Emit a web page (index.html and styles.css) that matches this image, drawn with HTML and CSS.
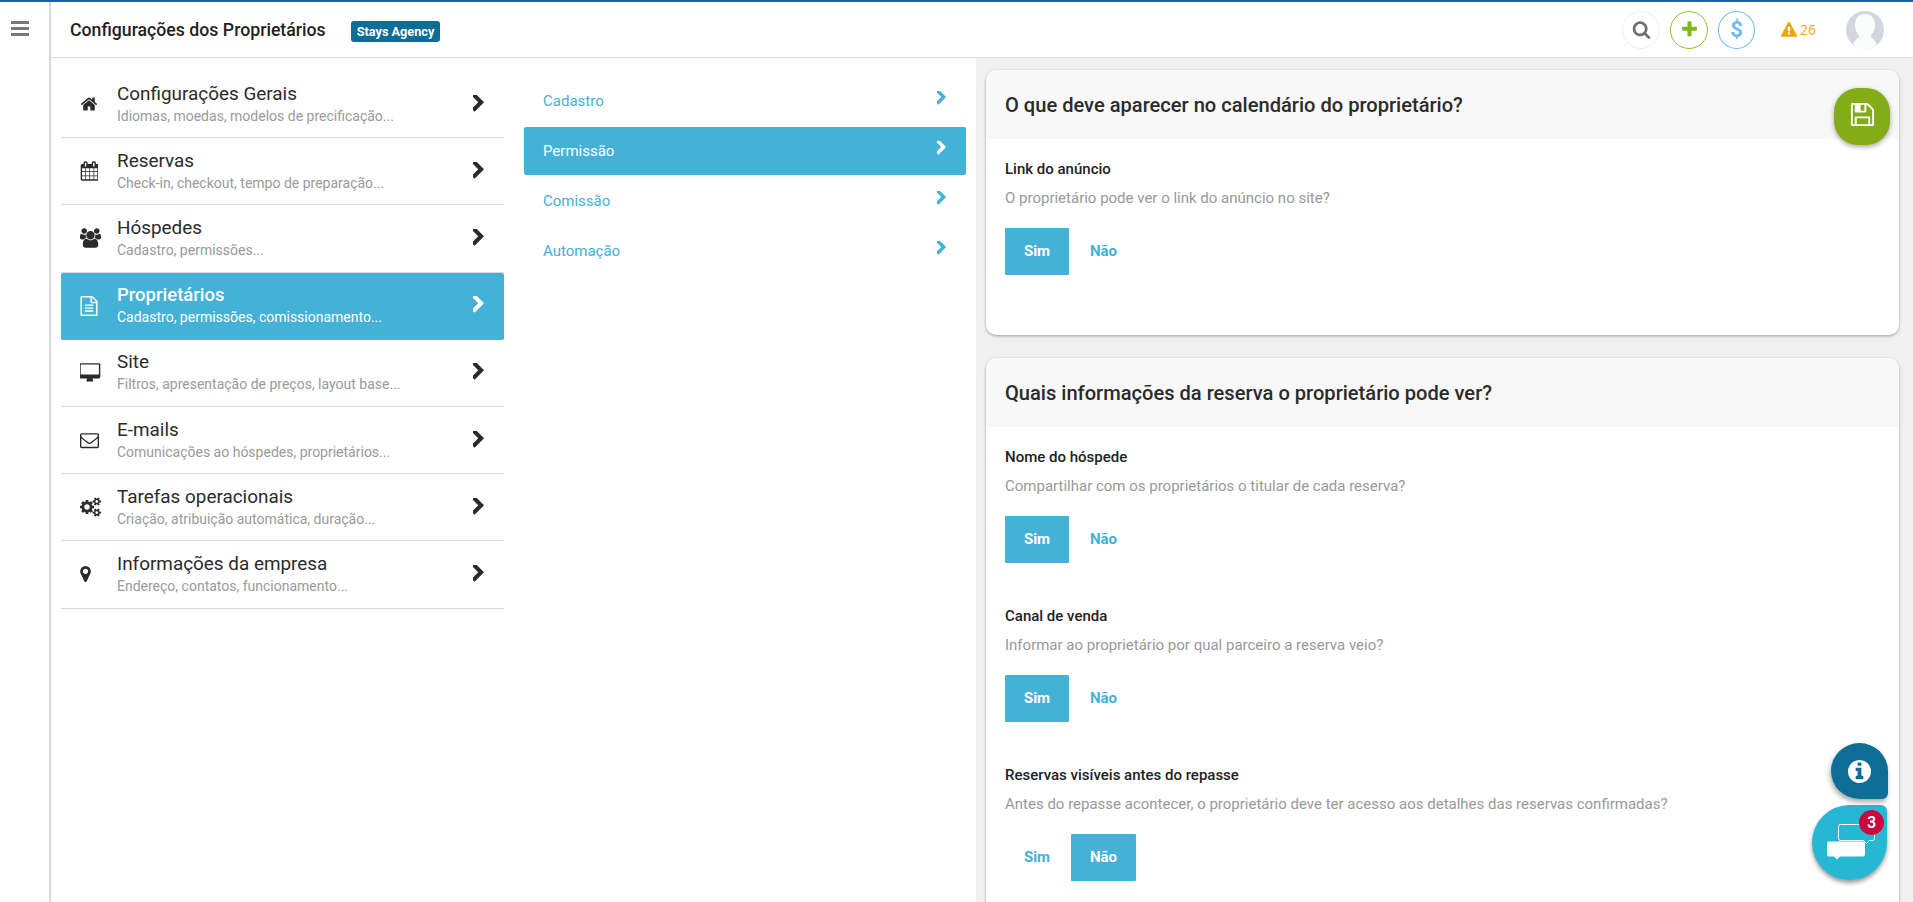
FILE: index.html
```html
<!DOCTYPE html>
<html lang="pt-BR">
<head>
<meta charset="utf-8">
<title>Configurações dos Proprietários</title>
<link rel="stylesheet" href="styles.css">
</head>
<body>
<svg class="defs" aria-hidden="true">
  <symbol id="i-chev" viewBox="440 230 960 1400"><path d="M1363 877l-742 742q-19 19-45 19t-45-19l-166-166q-19-19-19-45t19-45l531-531-531-531q-19-19-19-45t19-45l166-166q19-19 45-19t45 19l742 742q19 19 19 45t-19 45z" transform="translate(0 -6)"/></symbol>
  <symbol id="i-home" viewBox="0 0 1792 1792"><path d="M1472 992v480q0 26-19 45t-45 19h-384v-384h-256v384h-384q-26 0-45-19t-19-45v-480q0-1 .5-3t.5-3l575-474 575 474q1 2 1 6zm223-69l-62 74q-8 9-21 11h-3q-13 0-21-7l-692-577-692 577q-12 8-24 7-13-2-21-11l-62-74q-8-10-7-23.5t11-21.5l719-599q32-26 76-26t76 26l244 204v-195q0-14 9-23t23-9h192q14 0 23 9t9 23v408l219 182q10 8 11 21.5t-7 23.5z"/></symbol>
  <symbol id="i-cal" viewBox="0 0 1664 1792"><path d="M192 1664h288v-288h-288v288zm352 0h320v-288h-320v288zm-352-352h288v-320h-288v320zm352 0h320v-320h-320v320zm-352-384h288v-288h-288v288zm736 736h320v-288h-320v288zm-384-736h320v-288h-320v288zm768 736h288v-288h-288v288zm-384-352h320v-320h-320v320zm-352-864v-288q0-13-9.5-22.5t-22.5-9.5h-64q-13 0-22.5 9.5t-9.5 22.5v288q0 13 9.5 22.5t22.5 9.5h64q13 0 22.5-9.5t9.5-22.5zm736 864h288v-320h-288v320zm-384-384h320v-288h-320v288zm384 0h288v-288h-288v288zm32-480v-288q0-13-9.5-22.5t-22.5-9.5h-64q-13 0-22.5 9.5t-9.5 22.5v288q0 13 9.5 22.5t22.5 9.5h64q13 0 22.5-9.5t9.5-22.5zm384-64v1280q0 52-38 90t-90 38h-1408q-52 0-90-38t-38-90v-1280q0-52 38-90t90-38h128v-96q0-66 47-113t113-47h64q66 0 113 47t47 113v96h384v-96q0-66 47-113t113-47h64q66 0 113 47t47 113v96h128q52 0 90 38t38 90z"/></symbol>
  <symbol id="i-users" viewBox="0 0 1920 1792"><path d="M593 896q-162 5-265 128h-134q-82 0-138-40.5t-56-118.5q0-353 124-353 6 0 43.5 21t97.5 42.5 119 21.5q67 0 133-23-5 37-5 66 0 139 81 256zm1071 637q0 120-73 189.5t-194 69.5h-874q-121 0-194-69.5t-73-189.5q0-53 3.5-103.5t14-109 26.5-108.5 43-97.5 62-81 85.5-53.5 111.5-20q10 0 43 21.5t73 48 107 48 135 21.5 135-21.5 107-48 73-48 43-21.5q61 0 111.5 20t85.5 53.5 62 81 43 97.5 26.5 108.5 14 109 3.5 103.5zm-1024-1277q0 106-75 181t-181 75-181-75-75-181 75-181 181-75 181 75 75 181zm704 384q0 159-112.5 271.5t-271.5 112.5-271.5-112.5-112.5-271.5 112.5-271.5 271.5-112.5 271.5 112.5 112.5 271.5zm576 225q0 78-56 118.5t-138 40.5h-134q-103-123-265-128 81-117 81-256 0-29-5-66 66 23 133 23 59 0 119-21.5t97.5-42.5 43.5-21q124 0 124 353zm-128-609q0 106-75 181t-181 75-181-75-75-181 75-181 181-75 181 75 75 181z"/></symbol>
  <symbol id="i-file" viewBox="0 0 1792 1792"><path d="M1596 380q28 28 48 76t20 88v1152q0 40-28 68t-68 28h-1344q-40 0-68-28t-28-68v-1600q0-40 28-68t68-28h896q40 0 88 20t76 48zm-444-244v376h376q-10-29-22-41l-313-313q-12-12-41-22zm384 1528v-1024h-416q-40 0-68-28t-28-68v-416h-768v1536h1280zm-1024-864q0-14 9-23t23-9h704q14 0 23 9t9 23v64q0 14-9 23t-23 9h-704q-14 0-23-9t-9-23v-64zm736 224q14 0 23 9t9 23v64q0 14-9 23t-23 9h-704q-14 0-23-9t-9-23v-64q0-14 9-23t23-9h704zm0 256q14 0 23 9t9 23v64q0 14-9 23t-23 9h-704q-14 0-23-9t-9-23v-64q0-14 9-23t23-9h704z"/></symbol>
  <symbol id="i-desk" viewBox="0 0 1920 1792"><path d="M1728 992v-832q0-13-9.5-22.5t-22.5-9.5h-1600q-13 0-22.5 9.5t-9.5 22.5v832q0 13 9.5 22.5t22.5 9.5h1600q13 0 22.5-9.5t9.5-22.5zm128-832v1088q0 66-47 113t-113 47h-544q0 37 16 77.5t32 71 16 43.5q0 26-19 45t-45 19h-512q-26 0-45-19t-19-45q0-14 16-44t32-70 16-78h-544q-66 0-113-47t-47-113v-1088q0-66 47-113t113-47h1632q66 0 113 47t47 113z"/></symbol>
  <symbol id="i-env" viewBox="0 0 1792 1792"><path d="M1664 1504v-768q-32 36-69 66-268 206-426 338-51 43-83 67t-86.5 48.5-102.5 24.5h-2q-48 0-102.5-24.5t-86.5-48.5-83-67q-158-132-426-338-37-30-69-66v768q0 13 9.5 22.5t22.5 9.5h1472q13 0 22.5-9.5t9.5-22.5zm0-1051v-24.5l-.5-13-3-12.5-5.5-9-9-7.5-14-2.5h-1472q-13 0-22.5 9.5t-9.5 22.5q0 168 147 284 193 152 401 317 6 5 35 29.5t46 37.5 44.5 31.5 50.5 27.5 43 9h2q20 0 43-9t50.5-27.5 44.5-31.5 46-37.5 35-29.5q208-165 401-317 54-43 100.5-115.5t46.5-131.5zm128-37v1088q0 66-47 113t-113 47h-1472q-66 0-113-47t-47-113v-1088q0-66 47-113t113-47h1472q66 0 113 47t47 113z"/></symbol>
  <symbol id="i-cogs" viewBox="0 0 1920 1792"><path d="M896 896q0-106-75-181t-181-75-181 75-75 181 75 181 181 75 181-75 75-181zm768 512q0-52-38-90t-90-38-90 38-38 90q0 53 37.5 90.5t90.5 37.5 90.5-37.5 37.5-90.5zm0-1024q0-52-38-90t-90-38-90 38-38 90q0 53 37.5 90.5t90.5 37.5 90.5-37.5 37.5-90.5zm-384 421v185q0 10-7 19.5t-16 10.5l-155 24q-11 35-32 76 34 48 90 115 7 11 7 20 0 12-7 19-23 30-82.5 89.5t-78.5 59.5q-11 0-21-7l-115-90q-37 19-77 31-11 108-23 155-7 24-30 24h-186q-11 0-20-7.5t-10-17.5l-23-153q-34-10-75-31l-118 89q-7 7-20 7-11 0-21-8-144-133-144-160 0-9 7-19 10-14 41-53t47-61q-23-44-35-82l-152-24q-10-1-17-9.5t-7-19.5v-185q0-10 7-19.5t16-10.5l155-24q11-35 32-76-34-48-90-115-7-11-7-20 0-12 7-20 22-30 82-89t79-59q11 0 21 7l115 90q34-18 77-32 11-108 23-154 7-24 30-24h186q11 0 20 7.5t10 17.5l23 153q34 10 75 31l118-89q8-7 20-7 11 0 21 8 144 133 144 160 0 8-7 19-12 16-42 54t-45 60q23 48 34 82l152 23q10 2 17 10.5t7 19.5zm640 533v140q0 16-149 31-12 27-30 52 51 113 51 138 0 4-4 7-122 71-124 71-8 0-46-47t-52-68q-20 2-30 2t-30-2q-14 21-52 68t-46 47q-2 0-124-71-4-3-4-7 0-25 51-138-18-25-30-52-149-15-149-31v-140q0-16 149-31 13-29 30-52-51-113-51-138 0-4 4-7 4-2 35-20t59-34 30-16q8 0 46 46.5t52 67.5q20-2 30-2t30 2q51-71 92-112l6-2q4 0 124 70 4 3 4 7 0 25-51 138 17 23 30 52 149 15 149 31zm0-1024v140q0 16-149 31-12 27-30 52 51 113 51 138 0 4-4 7-122 71-124 71-8 0-46-47t-52-68q-20 2-30 2t-30-2q-14 21-52 68t-46 47q-2 0-124-71-4-3-4-7 0-25 51-138-18-25-30-52-149-15-149-31v-140q0-16 149-31 13-29 30-52-51-113-51-138 0-4 4-7 4-2 35-20t59-34 30-16q8 0 46 46.5t52 67.5q20-2 30-2t30 2q51-71 92-112l6-2q4 0 124 70 4 3 4 7 0 25-51 138 17 23 30 52 149 15 149 31z"/></symbol>
  <symbol id="i-pin" viewBox="0 128 1024 1536"><path d="M768 640q0-106-75-181t-181-75-181 75-75 181 75 181 181 75 181-75 75-181zm256 0q0 109-33 179l-364 774q-16 33-47.5 52t-67.5 19-67.5-19-46.5-52l-365-774q-33-70-33-179 0-212 150-362t362-150 362 150 150 362z"/></symbol>
</svg>

<div class="app">
  <aside class="rail">
    <svg class="burger" viewBox="0 0 18 15" aria-hidden="true"><rect width="18" height="3" y="0"/><rect width="18" height="3" y="6"/><rect width="18" height="3" y="12"/></svg>
  </aside>
  <div class="page">
    <header class="topbar">
      <h1 class="page-title">Configurações dos Proprietários</h1>
      <span class="badge">Stays Agency</span>
      <div class="tools">
        <span class="tool tool-search"><svg viewBox="0 0 1792 1792" aria-hidden="true"><path d="M1216 832q0-185-131.5-316.5t-316.5-131.5-316.5 131.5-131.5 316.5 131.5 316.5 316.5 131.5 316.5-131.5 131.5-316.5zm512 832q0 52-38 90t-90 38q-54 0-90-38l-343-342q-179 124-399 124-143 0-273.5-55.5t-225-150-150-225-55.5-273.5 55.5-273.5 150-225 225-150 273.5-55.5 273.5 55.5 225 150 150 225 55.5 273.5q0 220-124 399l343 343q37 37 37 90z"/></svg></span>
        <span class="tool tool-plus"><svg viewBox="0 0 1792 1792" aria-hidden="true"><path d="M1600 736v192q0 40-28 68t-68 28h-416v416q0 40-28 68t-68 28h-192q-40 0-68-28t-28-68v-416h-416q-40 0-68-28t-28-68v-192q0-40 28-68t68-28h416v-416q0-40 28-68t68-28h192q40 0 68 28t28 68v416h416q40 0 68 28t28 68z" transform="translate(0 -10)"/></svg></span>
        <span class="tool tool-dollar">$</span>
        <span class="alert"><svg viewBox="0 0 1792 1792" aria-hidden="true"><path d="M1024 1375v-190q0-14-9.5-23.5t-22.5-9.5h-192q-13 0-22.5 9.5t-9.5 23.5v190q0 14 9.5 23.5t22.5 9.5h192q13 0 22.5-9.5t9.5-23.5zm-2-374l18-459q0-12-10-19-13-11-24-11h-220q-11 0-24 11-10 7-10 21l17 457q0 10 10 16.5t24 6.5h185q14 0 23.5-6.5t10.5-16.5zm-14-934l768 1408q35 63-2 126-17 29-46.5 46t-63.5 17h-1536q-34 0-63.5-17t-46.5-46q-37-63-2-126l768-1408q17-31 47-49t65-18 65 18 47 49z"/></svg>26</span>
        <svg class="avatar" viewBox="0 0 38 38" aria-hidden="true"><circle cx="19" cy="19" r="19" fill="#d3d6dc"/><path d="M19 3c-6.500 0-10 4.500-10 11 0 4 1.500 7.500 3.500 10 1 1.500 0 3-2 4l-3.500 5C10 36.500 14.500 38 19 38s9-1.500 12-5l-3.500-5c-2-1-3-2.500-2-4C27.500 21.500 29 18 29 14c0-6.500-3.500-11-10-11z" fill="#fbfcfc"/></svg>
      </div>
    </header>
    <div class="body">
      <nav class="menu">
        <a class="menu-row"><svg class="ico ico-home"><use href="#i-home"/></svg><span class="menu-text"><b>Configurações Gerais</b><small>Idiomas, moedas, modelos de precificação...</small></span><svg class="chev"><use href="#i-chev"/></svg></a>
        <a class="menu-row"><svg class="ico ico-cal"><use href="#i-cal"/></svg><span class="menu-text"><b>Reservas</b><small>Check-in, checkout, tempo de preparação...</small></span><svg class="chev"><use href="#i-chev"/></svg></a>
        <a class="menu-row"><svg class="ico ico-users"><use href="#i-users"/></svg><span class="menu-text"><b>Hóspedes</b><small>Cadastro, permissões...</small></span><svg class="chev"><use href="#i-chev"/></svg></a>
        <a class="menu-row is-active"><svg class="ico ico-file"><use href="#i-file"/></svg><span class="menu-text"><b>Proprietários</b><small>Cadastro, permissões, comissionamento...</small></span><svg class="chev"><use href="#i-chev"/></svg></a>
        <a class="menu-row"><svg class="ico ico-desk"><use href="#i-desk"/></svg><span class="menu-text"><b>Site</b><small>Filtros, apresentação de preços, layout base...</small></span><svg class="chev"><use href="#i-chev"/></svg></a>
        <a class="menu-row"><svg class="ico ico-env"><use href="#i-env"/></svg><span class="menu-text"><b>E-mails</b><small>Comunicações ao hóspedes, proprietários...</small></span><svg class="chev"><use href="#i-chev"/></svg></a>
        <a class="menu-row"><svg class="ico ico-cogs"><use href="#i-cogs"/></svg><span class="menu-text"><b>Tarefas operacionais</b><small>Criação, atribuição automática, duração...</small></span><svg class="chev"><use href="#i-chev"/></svg></a>
        <a class="menu-row"><svg class="ico ico-pin"><use href="#i-pin"/></svg><span class="menu-text"><b>Informações da empresa</b><small>Endereço, contatos, funcionamento...</small></span><svg class="chev"><use href="#i-chev"/></svg></a>
      </nav>
      <nav class="submenu">
        <a class="sub-row"><span>Cadastro</span><svg class="sub-chev"><use href="#i-chev"/></svg></a>
        <a class="sub-row is-active"><span>Permissão</span><svg class="sub-chev"><use href="#i-chev"/></svg></a>
        <a class="sub-row"><span>Comissão</span><svg class="sub-chev"><use href="#i-chev"/></svg></a>
        <a class="sub-row"><span>Automação</span><svg class="sub-chev"><use href="#i-chev"/></svg></a>
      </nav>
      <main class="content">
        <section class="card card-first">
          <h2 class="card-head">O que deve aparecer no calendário do proprietário?</h2>
          <div class="card-body">
            <div class="field">
              <h3>Link do anúncio</h3>
              <p>O proprietário pode ver o link do anúncio no site?</p>
              <div class="toggle"><span class="opt on">Sim</span><span class="opt">Não</span></div>
            </div>
          </div>
        </section>
        <section class="card">
          <h2 class="card-head">Quais informações da reserva o proprietário pode ver?</h2>
          <div class="card-body">
            <div class="field">
              <h3>Nome do hóspede</h3>
              <p>Compartilhar com os proprietários o titular de cada reserva?</p>
              <div class="toggle"><span class="opt on">Sim</span><span class="opt">Não</span></div>
            </div>
            <div class="field">
              <h3>Canal de venda</h3>
              <p>Informar ao proprietário por qual parceiro a reserva veio?</p>
              <div class="toggle"><span class="opt on">Sim</span><span class="opt">Não</span></div>
            </div>
            <div class="field">
              <h3>Reservas visíveis antes do repasse</h3>
              <p>Antes do repasse acontecer, o proprietário deve ter acesso aos detalhes das reservas confirmadas?</p>
              <div class="toggle"><span class="opt">Sim</span><span class="opt on">Não</span></div>
            </div>
          </div>
        </section>
      </main>
    </div>
  </div>
</div>

<button class="fab fab-save" aria-label="Salvar"><svg viewBox="0 0 1792 1792" aria-hidden="true"><path d="M512 1536h768v-384h-768v384zm896 0h128v-896q0-14-10-38.500t-20-34.500l-281-281q-10-10-34-20t-39-10v416q0 40-28 68t-68 28h-576q-40 0-68-28t-28-68v-416h-128v1280h128v-416q0-40 28-68t68-28h832q40 0 68 28t28 68v416zm-384-928v-320q0-13-9.500-22.500t-22.500-9.500h-192q-13 0-22.500 9.500t-9.500 22.500v320q0 13 9.500 22.500t22.500 9.500h192q13 0 22.500-9.500t9.500-22.500zm640 32v928q0 40-28 68t-68 28h-1344q-40 0-68-28t-28-68v-1344q0-40 28-68t68-28h928q40 0 88 20t76 48l280 280q28 28 48 76t20 88z"/></svg></button>
<button class="fab fab-info" aria-label="Informações"><svg viewBox="128 128 1536 1536" aria-hidden="true"><path d="M1152 1376v-160q0-14-9-23t-23-9h-96v-512q0-14-9-23t-23-9h-320q-14 0-23 9t-9 23v160q0 14 9 23t23 9h96v320h-96q-14 0-23 9t-9 23v160q0 14 9 23t23 9h448q14 0 23-9t9-23zm-128-896v-160q0-14-9-23t-23-9h-192q-14 0-23 9t-9 23v160q0 14 9 23t23 9h192q14 0 23-9t9-23zm640 416q0 209-103 385.500t-279.500 279.500-385.500 103-385.500-103-279.500-279.500-103-385.500 103-385.500 279.500-279.500 385.500-103 385.500 103 279.500 279.500 103 385.500z"/></svg></button>
<button class="fab fab-chat" aria-label="Conversas">
  <svg viewBox="0 0 50 38" aria-hidden="true">
    <path d="M13.500 2.500a2 2 0 0 1 2-2h32a2 2 0 0 1 2 2v12a2 2 0 0 1-2 2h-3l-3 3-3-3H15.500a2 2 0 0 1-2-2z" fill="none" stroke="#fff" stroke-width="1"/>
    <path d="M4 17.500h34a2 2 0 0 1 2 2v11a2 2 0 0 1-2 2H15l-3 3-3-3H4a2 2 0 0 1-2-2v-11a2 2 0 0 1 2-2z" fill="#fff"/>
  </svg>
  <span class="fab-count">3</span>
</button>
</body>
</html>
```
FILE: styles.css
```css
* { box-sizing: border-box; }
html, body { margin: 0; height: 100%; overflow: hidden; }
body { font-family: Roboto, "Liberation Sans", sans-serif; background: #fff; color: #2b2b2b; }
a { display: flex; }
.defs { width: 0; height: 0; display: block; overflow: hidden; }

.app { display: flex; height: 902px; border-top: 2px solid #1f5ca3; }

.rail { width: 51px; flex: none; border-right: 2px solid #d9d9d9; background: #fff; padding: 19px 0 0 11px; }
.burger { display: block; width: 18px; height: 15px; fill: #777; }

.page { flex: 1; min-width: 0; display: flex; flex-direction: column; }

.topbar { height: 56px; flex: none; display: flex; align-items: center; padding-left: 19px; border-bottom: 1px solid #dcdcdc; background: #fff; }
.page-title { margin: 0; font-size: 17.7px; font-weight: 500; color: #1f1f1f; line-height: 20px; }
.badge { margin: 4px 0 0 25px; height: 21px; line-height: 21px; padding: 0 6px; background: #0d6d94; color: #fff; font-size: 12.7px; font-weight: 700; border-radius: 3px; }
.tools { margin-left: auto; display: flex; align-items: center; padding-right: 29px; }
.tool { width: 38px; height: 38px; border-radius: 50%; display: flex; align-items: center; justify-content: center; background: #fff; border: 1px solid #eee; margin-right: 10px; }
.tool svg { width: 19px; height: 19px; }
.tool-search svg { fill: #6f6f6f; }
.tool-plus { border-color: #8dc21f; }
.tool-plus svg { fill: #80b918; width: 19px; height: 19px; }
.tool-dollar { width: 37px; border-color: #71bbe4; color: #71bbe4; font-size: 22px; font-weight: 700; margin-right: 26px; padding-bottom: 1px; }
.alert { display: flex; align-items: center; width: 65px; color: #f5a623; font-family: "Open Sans", sans-serif; font-weight: 400; font-size: 14px; }
.alert svg { width: 16px; height: 16px; fill: #f5a300; margin-right: 3px; }
.avatar { width: 38px; height: 38px; display: block; }

.body { flex: 1; min-height: 0; display: flex; }

.menu { width: 443px; flex: none; margin: 13px 0 0 10px; }
.menu-row { height: 67.2px; align-items: center; border-bottom: 1px solid #dcdcdc; color: #2b2b2b; position: relative; padding-left: 19px; }
.menu-row.is-active { background: #44b2d7; color: #fff; border-bottom-color: #44b2d7; border-radius: 2px; }
.ico { flex: none; height: 20px; fill: #2b2b2b; }
.is-active .ico { fill: #fff; }
.ico-home { width: 18px; height: 18px; margin-right: 20px; }
.ico-cal { width: 18px; margin-right: 20px; }
.ico-users { width: 21px; margin-right: 17px; }
.ico-file { width: 20px; margin: 0 19px 0 -1px; }
.ico-desk { width: 21px; margin-right: 17px; }
.ico-env { width: 19px; margin-right: 19px; }
.ico-cogs { width: 21px; margin-right: 17px; }
.ico-pin { width: 11px; height: 16px; margin-right: 27px; }
.menu-text { flex: 1; display: flex; flex-direction: column; padding-bottom: 1px; margin-left: -1px; }
.menu-text b { font-weight: 400; font-size: 18.9px; line-height: 24px; }
.is-active .menu-text b { font-weight: 500; font-size: 18.5px; }
.menu-text small { font-size: 14px; line-height: 20px; color: #9a9a9a; }
.is-active .menu-text small { color: #fff; }
.chev { width: 11px; height: 17px; flex: none; margin: -2px 20px 0 0; fill: #2b2b2b; }
.is-active .chev { fill: #fff; }

.submenu { width: 442px; flex: none; margin: 19px 10px 0 20px; }
.sub-row { height: 48px; margin-bottom: 2px; align-items: center; justify-content: space-between; padding: 0 20px 0 19px; font-size: 15px; color: #45b2d7; border-radius: 2px; }
.sub-row span { padding-bottom: 1px; }
.sub-row.is-active { background: #44b2d7; color: #fff; }
.sub-chev { width: 9px; height: 14px; fill: currentColor; margin-top: -6px; }

.content { flex: 1; min-width: 0; background: #f0f0f0; padding: 12px 14px 0 10px; overflow: hidden; }
.card { background: #fff; border-radius: 10px; box-shadow: 0 1px 3px rgba(0,0,0,.35); margin-bottom: 23px; }
.card-head { margin: 0; height: 69px; padding: 0 19px; display: flex; align-items: center; background: #f8f8f8; border-radius: 10px 10px 0 0; font-size: 20.1px; font-weight: 500; color: #2b2b2b; }
.card-body { padding: 20px 19px 17px; }
.field { margin-bottom: 43px; }
.field h3 { margin: 0 0 9px; font-size: 15px; line-height: 20px; font-weight: 500; color: #222; }
.field p { margin: 0 0 20px; font-size: 15px; line-height: 20px; color: #999; }
.toggle { display: flex; height: 47px; }
.opt { width: 65px; margin-left: 2px; padding-bottom: 1px; display: flex; align-items: center; justify-content: center; font-size: 15px; font-weight: 700; color: #44b2d7; border-radius: 1px; }
.opt:first-child { width: 64px; margin-left: 0; }
.opt.on { background: #44b2d7; color: #fff; }

.fab { position: fixed; border: 0; padding: 0; display: flex; align-items: center; justify-content: center; }
.fab-save { left: 1834px; top: 88px; width: 56px; height: 57px; border-radius: 24px; background: #83ac17; box-shadow: 0 2px 5px rgba(0,0,0,.35); }
.fab-save svg { width: 27px; height: 27px; fill: #fff; margin-bottom: 4px; }
.fab-info { left: 1831px; top: 743px; width: 57px; height: 56px; border-radius: 50% 50% 6px 50%; background: #0d6d94; box-shadow: -1px 3px 5px rgba(0,0,0,.35); }
.fab-info svg { width: 23px; height: 23px; fill: #fff; }
.fab-chat { left: 1812px; top: 805px; width: 75px; height: 75px; border-radius: 50% 6px 50% 50%; background: #26b7d3; box-shadow: 0 3px 4px rgba(0,0,0,.4); }
.fab-chat svg { width: 50px; height: 38px; margin-left: 1px; }
.fab-count { position: absolute; left: 47px; top: 5px; width: 25px; height: 25px; border-radius: 50%; background: #c9083f; color: #fff; font-family: Roboto, sans-serif; font-size: 16px; font-weight: 700; line-height: 25px; text-align: center; }
```
